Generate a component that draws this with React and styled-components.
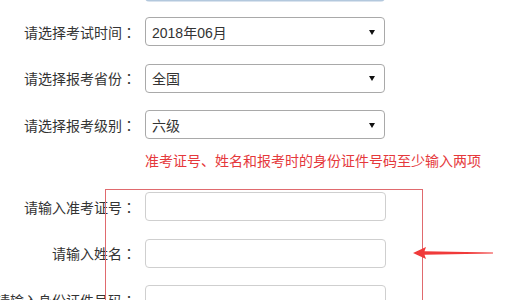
import React from "react";
import styled, { createGlobalStyle } from "styled-components";

const Global = createGlobalStyle`
  html, body { margin: 0; padding: 0; background: #fff; overflow: hidden; }
  body {
    font-family: "Liberation Sans", "Noto Sans CJK SC", sans-serif;
    font-size: 14px;
    color: #333;
  }
`;

const Page = styled.div`
  position: relative;
  width: 505px;
  height: 300px;
  overflow: hidden;
`;

const Form = styled.div`
  display: flex;
  flex-direction: column;
  margin-top: -29.5px;
`;

const Row = styled.div`
  display: grid;
  grid-template-columns: 136px 241px;
  column-gap: 9px;
  align-items: center;
  height: 29px;
  margin-top: ${(p) => p.$mt ?? 17.5}px;
`;

const Label = styled.div`
  display: flex;
  justify-content: flex-end;
  white-space: nowrap;
  font-family: "Noto Sans CJK SC", sans-serif;
  font-size: 14px;
  line-height: 20px;
  color: #333;
`;

const Colon = styled.span`
  font-family: "Noto Sans CJK JP", sans-serif;
`;

const SelectBox = styled.div`
  box-sizing: border-box;
  width: 240px;
  height: 29px;
  border: 1px solid ${(p) => (p.$focused ? "#a9c1d8" : "#a9a9a9")};
  border-radius: 4px;
  display: flex;
  align-items: center;
  justify-content: space-between;
  padding: 0 9px 0 6px;
  font-size: 14px;
  color: #333;
  box-shadow: ${(p) => (p.$focused ? "0 1.5px 0 #b3c8dd" : "none")};
`;

const Caret = styled.span`
  width: 0;
  height: 0;
  border-left: 3.5px solid transparent;
  border-right: 3.5px solid transparent;
  border-top: 5px solid #111;
  margin-top: 1px;
`;

const Input = styled.div`
  box-sizing: border-box;
  width: 241px;
  height: 29px;
  border: 1px solid #cfcfcf;
  border-radius: 4px;
  background: #fff;
`;

const Note = styled.div`
  margin-top: 11px;
  padding-left: 145px;
  font-family: "Noto Sans CJK SC", sans-serif;
  font-size: 14px;
  line-height: 20px;
  color: #e5383b;
  white-space: nowrap;
`;

const Highlight = styled.div`
  position: absolute;
  left: 105px;
  top: 189px;
  width: 318px;
  height: 130px;
  box-sizing: border-box;
  border: 1px solid #e06a6e;
  pointer-events: none;
`;

const ArrowSvg = styled.svg`
  position: absolute;
  left: 405px;
  top: 243px;
  width: 95px;
  height: 20px;
`;

const selects = [
  { label: "请选择考试时间", value: "2018年06月" },
  { label: "请选择报考省份", value: "全国" },
  { label: "请选择报考级别", value: "六级" },
];

const inputs = ["请输入准考证号", "请输入姓名", "请输入身份证件号码"];

export default function App() {
  return (
    <Page>
      <Global />
      <Form>
        <Row $mt={0}>
          <Label />
          <SelectBox $focused />
        </Row>
        {selects.map((s) => (
          <Row key={s.label}>
            <Label>
              {s.label}
              <Colon>：</Colon>
            </Label>
            <SelectBox>
              <span>{s.value}</span>
              <Caret />
            </SelectBox>
          </Row>
        ))}
        <Note>准考证号、姓名和报考时的身份证件号码至少输入两项</Note>
        {inputs.map((l, i) => (
          <Row key={l} $mt={i === 0 ? 22 : 17.5}>
            <Label>
              {l}
              <Colon>：</Colon>
            </Label>
            <Input />
          </Row>
        ))}
      </Form>
      <Highlight />
      <ArrowSvg viewBox="0 0 95 20">
        <path
          d="M8 10 L21 4 L19.5 8.2 L88 9.6 L88 10.4 L19.5 11.8 L21 16 Z"
          fill="#f03a3a"
        />
      </ArrowSvg>
    </Page>
  );
}
